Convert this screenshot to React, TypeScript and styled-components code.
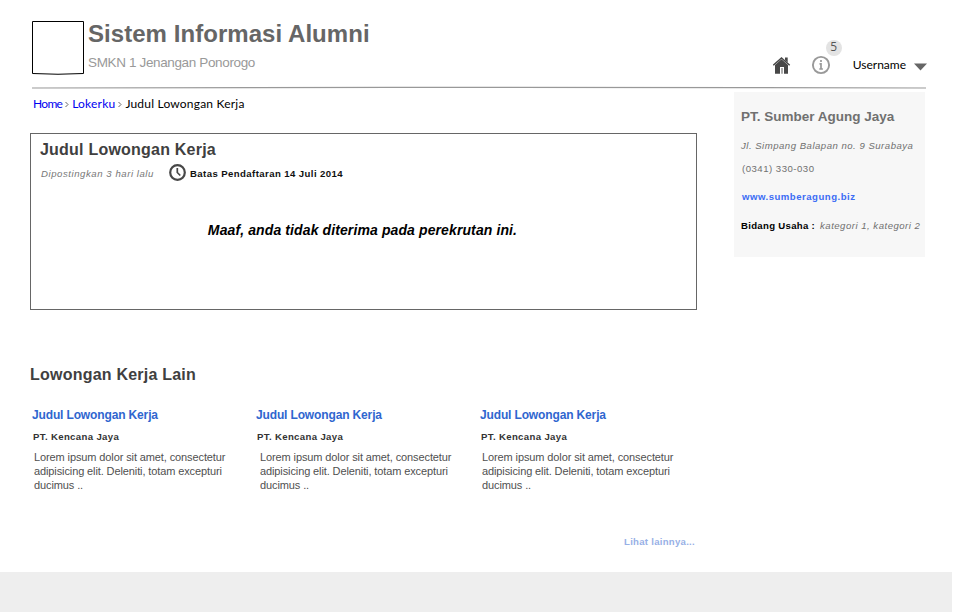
import React from 'react';
import styled, { createGlobalStyle } from 'styled-components';

const GlobalStyle = createGlobalStyle`
  *, *::before, *::after { box-sizing: border-box; }
  body { margin: 0; background: #fff; font-family: "Liberation Sans", Arial, sans-serif; }
  a { text-decoration: none; }
  h1, h2, h3, p { margin: 0; }
`;

const Page = styled.div`
  width: 953px;
  height: 612px;
  display: flex;
  flex-direction: column;
  overflow: hidden;
`;

const Header = styled.header`
  height: 86px;
  padding: 20px 26px 0 32px;
  display: flex;
  align-items: flex-start;
`;

const Logo = styled.svg`
  flex: none;
  margin-top: 1px;
`;

const Brand = styled.div`
  flex: 1;
  padding-left: 4px;
`;

const SiteTitle = styled.h1`
  font-size: 24px;
  line-height: 28px;
  letter-spacing: 0.05px;
  color: #666;
`;

const SiteSubtitle = styled.p`
  margin-top: 6px;
  font-size: 13.5px;
  line-height: 18px;
  letter-spacing: -0.36px;
  color: #999;
`;

const Tools = styled.div`
  display: flex;
  align-items: center;
  height: 20px;
  margin-top: 35px;
`;

const Notification = styled.div`
  position: relative;
  width: 20px;
  height: 20px;
  margin: 0 22px 0 20px;
`;

const Badge = styled.span`
  position: absolute;
  left: 15px;
  top: -15px;
  width: 16px;
  height: 16px;
  border-radius: 50%;
  background: #e3e3e3;
  color: #555;
  font: 12px/14px "Open Sans", sans-serif;
  text-align: center;
`;

const UserMenu = styled.div`
  display: flex;
  align-items: center;
  gap: 8px;
  font: 12px/20px Lato, sans-serif;
  color: #000;
`;

const Caret = styled.svg`
  margin-top: 3px;
`;

const Rule = styled.svg`
  flex: none;
  display: block;
  margin-left: 32px;
`;

const Body = styled.div`
  height: 482px;
  padding: 2px 28px 0 30px;
  display: flex;
  justify-content: space-between;
  align-items: flex-start;
`;

const Main = styled.main`
  width: 667px;
`;

const Breadcrumb = styled.nav`
  display: flex;
  align-items: center;
  padding: 2px 0 0 3px;
  font: 12px/20px Lato, sans-serif;
  color: #000;
`;

const Crumb = styled.a<{ $spacing: number }>`
  color: #0000f0;
  letter-spacing: ${p => p.$spacing}px;
`;

const CurrentCrumb = styled.span`
  letter-spacing: 0.2px;
`;

const Chevron = styled.svg`
  margin: 1px 3px 0;
`;

const Notice = styled.section`
  height: 177px;
  margin-top: 19px;
  padding: 5px 9px 0;
  border: 1px solid #666;
`;

const Heading = styled.h2`
  font-size: 16px;
  line-height: 22px;
  letter-spacing: 0.22px;
  color: #404040;
`;

const Meta = styled.div`
  display: flex;
  align-items: center;
  height: 20px;
  margin-top: 2px;
  padding-left: 1px;
  font-size: 9.6px;
`;

const Posted = styled.span`
  width: 128px;
  padding-top: 1px;
  line-height: 20px;
  font-style: italic;
  letter-spacing: 0.55px;
  color: #777;
`;

const Deadline = styled.strong`
  margin-left: 3px;
  padding-top: 1px;
  line-height: 20px;
  letter-spacing: 0.41px;
  color: #111;
`;

const Message = styled.p`
  margin-top: 37px;
  padding-right: 2px;
  font-size: 14px;
  line-height: 20px;
  font-weight: bold;
  font-style: italic;
  letter-spacing: 0.11px;
  text-align: center;
  color: #000;
`;

const Others = styled.section`
  margin-top: 54px;
`;

const CardGrid = styled.div`
  display: grid;
  grid-template-columns: repeat(3, 224px);
  margin-top: 19px;
`;

const Card = styled.article`
  padding-left: 2px;
`;

const CardTitle = styled.a`
  display: block;
  font-size: 12px;
  line-height: 20px;
  font-weight: bold;
  letter-spacing: -0.14px;
  color: #2f66cf;
`;

const Company = styled.h3`
  margin: 2px 0 0 1px;
  font-size: 9.6px;
  line-height: 20px;
  letter-spacing: 0.35px;
  color: #333;
`;

const Excerpt = styled.p<{ $indent: number }>`
  margin: 3px 0 0 ${p => p.$indent}px;
  font-size: 11px;
  line-height: 14px;
  letter-spacing: -0.11px;
  white-space: pre-line;
  color: #505050;
`;

const More = styled.a`
  display: block;
  margin: 40px 2px 0 0;
  font-size: 9.6px;
  line-height: 20px;
  font-weight: bold;
  letter-spacing: 0.27px;
  text-align: right;
  color: #97b0e6;
`;

const Profile = styled.aside`
  width: 191px;
  height: 165px;
  padding: 15px 0 0 7px;
  background: #f7f7f7;
  white-space: nowrap;
`;

const ProfileName = styled.h3`
  font-size: 13.5px;
  line-height: 20px;
  letter-spacing: 0;
  color: #707070;
`;

const ProfileLine = styled.p<{ $top: number; $indent?: number; $italic?: boolean }>`
  margin: ${p => p.$top}px 0 0 ${p => p.$indent ?? 0}px;
  font-size: 9.6px;
  line-height: 20px;
  font-style: ${p => (p.$italic ? 'italic' : 'normal')};
  letter-spacing: 0.49px;
  color: #707070;
`;

const Website = styled.a`
  font-weight: bold;
  color: #3c6cf5;
`;

const Label = styled.strong`
  margin-right: 5px;
  letter-spacing: 0.3px;
  color: #000;
`;

const Footer = styled.footer`
  width: 952px;
  height: 40px;
  background: #eee;
`;

const HomeIcon = () => (
  <svg width="18" height="18" viewBox="0 0 18 18">
    <path d="M2 9 8.500 3.200 15 9v8.800h-4V11H7v6.800H2z" fill="#484848" />
    <path d="M.3 9.300 8.500 2l8.200 7.300" fill="none" stroke="#484848" strokeWidth="1.500" />
    <path d="M12 1.500h2.700v5L12 4.200z" fill="#484848" />
    <path d="M8.200 12h1.600v5.800H8.200z" fill="#999" />
  </svg>
);

const InfoIcon = () => (
  <svg width="20" height="20" viewBox="0 0 20 20">
    <circle cx="10" cy="10" r="8.100" fill="none" stroke="#999" strokeWidth="1.900" />
    <path d="M10 5v2M8.500 8.800H10v5M8.300 14h3.600" fill="none" stroke="#999" strokeWidth="1.700" />
  </svg>
);

const ClockIcon = () => (
  <svg width="18" height="18" viewBox="0 0 18 18">
    <circle cx="8.500" cy="8.500" r="7.300" fill="#fff" stroke="#484848" strokeWidth="2.200" />
    <path d="M8.300 4V8.500l3 3" fill="none" stroke="#484848" strokeWidth="1.700" />
  </svg>
);

const Separator = () => (
  <Chevron width="4" height="7" viewBox="0 0 4 7">
    <path d="M.5 1 3 3.500.5 6" fill="none" stroke="#666" />
  </Chevron>
);

const excerpt = 'Lorem ipsum dolor sit amet, consectetur\nadipisicing elit. Deleniti, totam excepturi\nducimus ..';
const jobs = [
  { id: 1, indent: 2 },
  { id: 2, indent: 4 },
  { id: 3, indent: 2 },
];

export default function App() {
  return (
    <Page>
      <GlobalStyle />
      <Header>
        <Logo width="52" height="54" viewBox="0 0 52 54">
          <path d="M.5.5h51v52Q26 54 .5 52.500z" fill="#fff" stroke="#000" />
        </Logo>
        <Brand>
          <SiteTitle>Sistem Informasi Alumni</SiteTitle>
          <SiteSubtitle>SMKN 1 Jenangan Ponorogo</SiteSubtitle>
        </Brand>
        <Tools>
          <HomeIcon />
          <Notification>
            <InfoIcon />
            <Badge>5</Badge>
          </Notification>
          <UserMenu>
            Username
            <Caret width="13" height="8" viewBox="0 0 13 8">
              <path d="M0 .5h13L6.500 7.500z" fill="#666" />
            </Caret>
          </UserMenu>
        </Tools>
      </Header>
      <Rule width="894" height="4" viewBox="0 0 894 4">
        <path d="M0 2C250 1.500 320 1.300 450 1.300S750 1.500 894 2" fill="none" stroke="#999" strokeWidth="1.200" />
      </Rule>
      <Body>
        <Main>
          <Breadcrumb>
            <Crumb $spacing={-0.7}>Home</Crumb>
            <Separator />
            <Crumb $spacing={0.2}>Lokerku</Crumb>
            <Separator />
            <CurrentCrumb>Judul Lowongan Kerja</CurrentCrumb>
          </Breadcrumb>
          <Notice>
            <Heading>Judul Lowongan Kerja</Heading>
            <Meta>
              <Posted>Dipostingkan 3 hari lalu</Posted>
              <ClockIcon />
              <Deadline>Batas Pendaftaran 14 Juli 2014</Deadline>
            </Meta>
            <Message>Maaf, anda tidak diterima pada perekrutan ini.</Message>
          </Notice>
          <Others>
            <Heading>Lowongan Kerja Lain</Heading>
            <CardGrid>
              {jobs.map(job => (
                <Card key={job.id}>
                  <CardTitle>Judul Lowongan Kerja</CardTitle>
                  <Company>PT. Kencana Jaya</Company>
                  <Excerpt $indent={job.indent}>{excerpt}</Excerpt>
                </Card>
              ))}
            </CardGrid>
            <More>Lihat lainnya...</More>
          </Others>
        </Main>
        <Profile>
          <ProfileName>PT. Sumber Agung Jaya</ProfileName>
          <ProfileLine $top={9} $italic>Jl. Simpang Balapan no. 9 Surabaya</ProfileLine>
          <ProfileLine $top={3} $indent={1}>(0341) 330-030</ProfileLine>
          <ProfileLine $top={8} $indent={1}><Website>www.sumberagung.biz</Website></ProfileLine>
          <ProfileLine $top={9}><Label>Bidang Usaha :</Label><i>kategori 1, kategori 2</i></ProfileLine>
        </Profile>
      </Body>
      <Footer />
    </Page>
  );
}
